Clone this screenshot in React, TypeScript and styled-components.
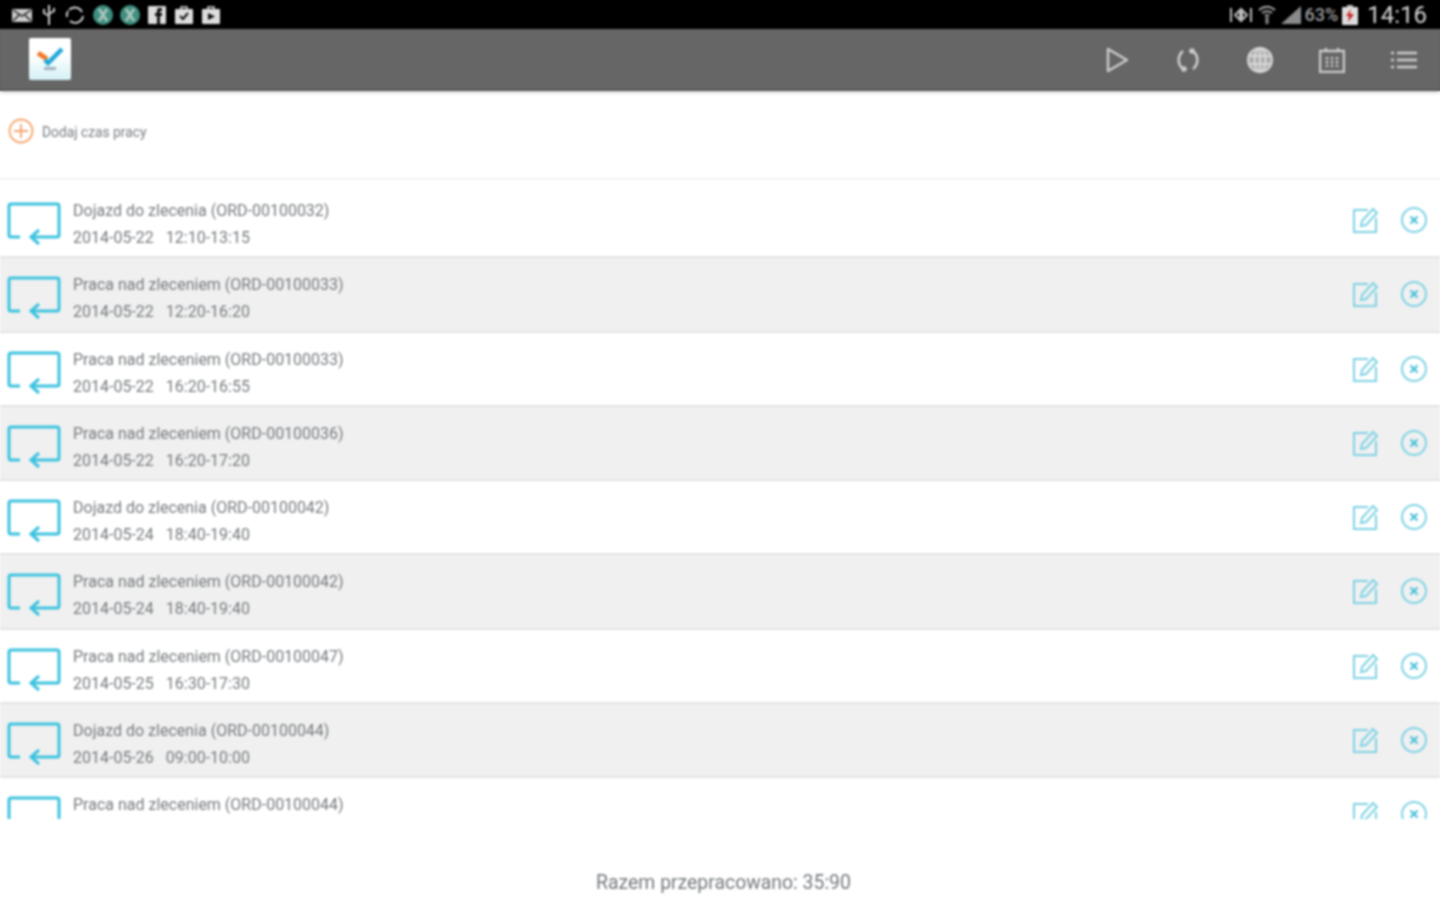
import styled, { createGlobalStyle } from 'styled-components'

interface Entry {
  title: string
  date: string
  time: string
}

const entries: Entry[] = [
  { title: 'Dojazd do zlecenia (ORD-00100032)', date: '2014-05-22', time: '12:10-13:15' },
  { title: 'Praca nad zleceniem (ORD-00100033)', date: '2014-05-22', time: '12:20-16:20' },
  { title: 'Praca nad zleceniem (ORD-00100033)', date: '2014-05-22', time: '16:20-16:55' },
  { title: 'Praca nad zleceniem (ORD-00100036)', date: '2014-05-22', time: '16:20-17:20' },
  { title: 'Dojazd do zlecenia (ORD-00100042)', date: '2014-05-24', time: '18:40-19:40' },
  { title: 'Praca nad zleceniem (ORD-00100042)', date: '2014-05-24', time: '18:40-19:40' },
  { title: 'Praca nad zleceniem (ORD-00100047)', date: '2014-05-25', time: '16:30-17:30' },
  { title: 'Dojazd do zlecenia (ORD-00100044)', date: '2014-05-26', time: '09:00-10:00' },
  { title: 'Praca nad zleceniem (ORD-00100044)', date: '2014-05-26', time: '10:00-11:00' },
]

const AppBadge = () => (
  <svg width="20" height="20" viewBox="0 0 20 20" fill="none">
    <circle cx="10" cy="10" r="10" fill="#3f8f80" />
    <path d="M6 4l8 12M14 4L6 16" stroke="#a9c4bc" strokeWidth="3" />
  </svg>
)

const App = () => {
  return (
    <>
      <GlobalStyle />
      <Screen>
        <StatusBar>
          <StatusIcons>
            <IconGroup $gap={9}>
              <svg width="22" height="16" viewBox="0 0 22 16" fill="none">
                <rect x="1" y="2" width="20" height="13" rx="1" fill="#ccc" />
                <path d="M2 3l9 6 9-6M2 14l6-6M20 14l-6-6" stroke="#222" strokeWidth="1.5" />
              </svg>
              <svg width="14" height="22" viewBox="0 0 14 22" fill="none" stroke="#ccc" strokeWidth="2">
                <path d="M7 1v20M2 5v4l5 3M12 4v3l-5 3" />
              </svg>
              <svg width="20" height="20" viewBox="0 0 20 20" fill="none" stroke="#ddd" strokeWidth="1.8">
                <path d="M4 5a8 8 0 0 1 13 2M18 11a8 8 0 0 1-13 5M2 12a8 8 0 0 1 1-6" />
              </svg>
            </IconGroup>
            <IconGroup $gap={7}>
              <AppBadge />
              <AppBadge />
            </IconGroup>
            <IconGroup $gap={9}>
              <svg width="18" height="18" viewBox="0 0 18 18">
                <rect width="18" height="18" rx="1" fill="#ddd" />
                <path d="M12 18V10h2V7h-2V5h2V2h-3C9 2 9 4 9 5v2H7v3h2v8z" fill="#111" />
              </svg>
              <svg width="18" height="20" viewBox="0 0 18 20">
                <rect y="4" width="18" height="15" rx="1" fill="#ddd" />
                <path d="M6 5V2h6v3" stroke="#ddd" strokeWidth="1.5" fill="none" />
                <path d="M5 11l3 3 5-6" stroke="#111" strokeWidth="2" fill="none" />
              </svg>
              <svg width="18" height="20" viewBox="0 0 18 20">
                <rect y="4" width="18" height="15" rx="1" fill="#ddd" />
                <path d="M6 5V2h6v3" stroke="#ddd" strokeWidth="1.5" fill="none" />
                <path d="M6 8l7 3.5L6 15z" fill="#111" />
              </svg>
            </IconGroup>
          </StatusIcons>
          <StatusRight>
            <svg width="24" height="16" viewBox="0 0 24 16" fill="none" stroke="#bbb" strokeWidth="2">
              <path d="M2 1v14M22 1v14M6 8l5-5v10zM18 8l-5-5v10z" />
            </svg>
            <svg width="20" height="20" viewBox="0 0 20 20" fill="none" stroke="#aaa" strokeWidth="2">
              <path d="M2 5c5-4 11-4 16 0M5 8c3-2 7-2 10 0M8 11c1-1 3-1 4 0" />
              <path d="M10 12v7" strokeWidth="3" stroke="#888" />
            </svg>
            <svg width="20" height="20" viewBox="0 0 20 20">
              <path d="M20 1v18H0z" fill="#8a8a8a" />
            </svg>
            <Battery>63%</Battery>
            <svg width="16" height="20" viewBox="0 0 16 20">
              <rect x="5" y="0" width="6" height="3" fill="#bbb" />
              <rect y="2" width="16" height="18" rx="1" fill="#ddd" />
              <path d="M9 4L4 11h3l-1 6 6-8H8z" fill="#c22" />
            </svg>
            <Clock>14:16</Clock>
          </StatusRight>
        </StatusBar>

        <Toolbar>
          <Logo>
            <svg width="30" height="26" viewBox="0 0 30 26" fill="none">
              <path d="M3 7l9 6" stroke="#f07a28" strokeWidth="5" />
              <path d="M10 14l3 3L27 3" stroke="#22a8d8" strokeWidth="4.5" />
              <rect x="9" y="21" width="12" height="3" fill="#9db4bb" />
            </svg>
          </Logo>
          <ToolbarActions>
            <svg width="24" height="26" viewBox="0 0 24 26" fill="none" stroke="#ccc" strokeWidth="2.4">
              <path d="M3 2l19 11L3 24z" strokeLinejoin="round" />
            </svg>
            <svg width="26" height="26" viewBox="0 0 26 26" fill="none" stroke="#ccc" strokeWidth="2.6">
              <path d="M8 4C3 8 2 16 7 21M18 22c5-4 6-12 1-17" />
              <circle cx="9" cy="22" r="1.5" fill="#ccc" />
              <circle cx="17" cy="4" r="1.5" fill="#ccc" />
            </svg>
            <svg width="26" height="26" viewBox="0 0 26 26" fill="none" stroke="#d8d8d8" strokeWidth="2">
              <circle cx="13" cy="13" r="12" fill="#aaa" />
              <ellipse cx="13" cy="13" rx="5.5" ry="12" />
              <path d="M1 9h24M1 17h24M13 1v24" />
            </svg>
            <svg width="26" height="26" viewBox="0 0 26 26" fill="none" stroke="#ccc" strokeWidth="2.4">
              <rect x="1" y="4" width="24" height="21" />
              <path d="M7 1v4M19 1v4" />
              <path d="M8 10v10M13 10v10M18 10v10" strokeDasharray="2.5 1.5" />
            </svg>
            <svg width="26" height="22" viewBox="0 0 26 22" fill="none" stroke="#ccc" strokeWidth="2.4">
              <path d="M6 4h20M6 11h20M6 18h20M0 4h3M0 11h3M0 18h3" />
            </svg>
          </ToolbarActions>
        </Toolbar>

        <AddRow>
          <svg width="26" height="26" viewBox="0 0 26 26" fill="none" stroke="#f5a56c" strokeWidth="1.8">
            <circle cx="13" cy="13" r="11.5" />
            <path d="M13 6v14M6 13h14" />
          </svg>
          <AddLabel>Dodaj czas pracy</AddLabel>
        </AddRow>

        <List>
          {entries.map((entry, i) => (
            <Row key={i} $shaded={i % 2 === 1}>
              <EntryIcon width="54" height="44" viewBox="0 0 54 44" fill="none" stroke="#3cc3df" strokeWidth="3">
                <path d="M2 33V4a2 2 0 0 1 2-2h46a2 2 0 0 1 2 2v29a2 2 0 0 1-2 2H25" />
                <path d="M2 33a2 2 0 0 0 2 2h9M32 28l-8 7 8 7" />
              </EntryIcon>
              <RowText>
                <RowTitle>{entry.title}</RowTitle>
                <RowMeta>
                  <span>{entry.date}</span>
                  <span>{entry.time}</span>
                </RowMeta>
              </RowText>
              <RowActions>
                <svg width="28" height="28" viewBox="0 0 28 28" fill="none" stroke="#7fd3e4" strokeWidth="2">
                  <path d="M16 4H2v22h22V12" />
                  <path d="M9 20l1-5L21 3l4 4-11 12z" />
                </svg>
                <svg width="26" height="26" viewBox="0 0 26 26" fill="none" stroke="#7fd3e4" strokeWidth="2">
                  <circle cx="13" cy="13" r="12" />
                  <path d="M9.5 9.5l7 7M16.5 9.5l-7 7" stroke="#45bfd9" />
                </svg>
              </RowActions>
            </Row>
          ))}
        </List>

        <Footer>Razem przepracowano: 35:90</Footer>
      </Screen>
    </>
  )
}
export default App

const GlobalStyle = createGlobalStyle`
  html, body {
    margin: 0;
    overflow: hidden;
  }
  html {
    background: linear-gradient(#000 29px, #666 29px 91px, #fff 91px);
  }
`

const Screen = styled.div`
  width: 1440px;
  height: 900px;
  display: flex;
  flex-direction: column;
  font-family: Roboto, "Liberation Sans", sans-serif;
  filter: blur(0.8px);
`

const StatusBar = styled.div`
  height: 29px;
  flex: none;
  background: #000;
  display: flex;
  align-items: center;
  justify-content: space-between;
  padding: 0 13px 0 11px;
`

const StatusIcons = styled.div`
  display: flex;
  align-items: center;
  gap: 8px;
`

const IconGroup = styled.div<{ $gap: number }>`
  display: flex;
  align-items: center;
  gap: ${(p) => p.$gap}px;
`

const StatusRight = styled.div`
  display: flex;
  align-items: center;
  gap: 4px;
`

const Battery = styled.span`
  color: #9a9a9a;
  font-size: 18px;
  font-weight: 500;
`

const Clock = styled.span`
  color: #d6d6d6;
  font-size: 24px;
  margin-left: 5px;
`

const Toolbar = styled.div`
  height: 62px;
  flex: none;
  background: #666;
  border-bottom: 2px solid #555;
  box-sizing: border-box;
  display: flex;
  align-items: center;
  justify-content: space-between;
  padding: 0 23px 0 29px;
  box-shadow: 0 2px 3px rgba(0, 0, 0, 0.15);
  z-index: 1;
`

const Logo = styled.div`
  width: 42px;
  height: 42px;
  background: linear-gradient(#fff 40%, #d4f1f5);
  border-radius: 2px;
  display: flex;
  align-items: center;
  justify-content: center;
`

const ToolbarActions = styled.div`
  display: flex;
  align-items: center;
  gap: 46px;
  margin-top: 2px;
`

const AddRow = styled.div`
  height: 89px;
  flex: none;
  box-sizing: border-box;
  border-bottom: 2px solid #f2f2f2;
  background: #fff;
  display: flex;
  align-items: flex-start;
  gap: 8px;
  padding: 27px 0 0 8px;
`

const AddLabel = styled.span`
  color: #767b7f;
  font-size: 13.8px;
  line-height: 28px;
`

const List = styled.div`
  height: 639px;
  flex: none;
  overflow: hidden;
  padding-top: 4px;
  box-sizing: border-box;
`

const Row = styled.div<{ $shaded: boolean }>`
  height: 74.25px;
  box-sizing: border-box;
  background: ${(p) => (p.$shaded ? '#f0f0f0' : '#fff')};
  border-bottom: 2px solid #e2e3e3;
  display: flex;
  align-items: center;
  padding: 0 13px 0 7px;
  gap: 12px;
`

const EntryIcon = styled.svg`
  flex: none;
  margin-top: 8px;
`

const RowText = styled.div`
  flex: 1;
  display: flex;
  flex-direction: column;
  gap: 8px;
  margin-top: 8px;
  color: #767b7f;
  font-size: 16px;
  line-height: 19px;
`

const RowTitle = styled.div``

const RowMeta = styled.div`
  display: flex;
  gap: 12px;
`

const RowActions = styled.div`
  display: flex;
  align-items: center;
  gap: 21px;
`

const Footer = styled.div`
  flex: 1;
  display: flex;
  align-items: center;
  justify-content: center;
  padding: 46px 0 0 7px;
  box-sizing: border-box;
  color: #747a7e;
  font-size: 19.4px;
`
